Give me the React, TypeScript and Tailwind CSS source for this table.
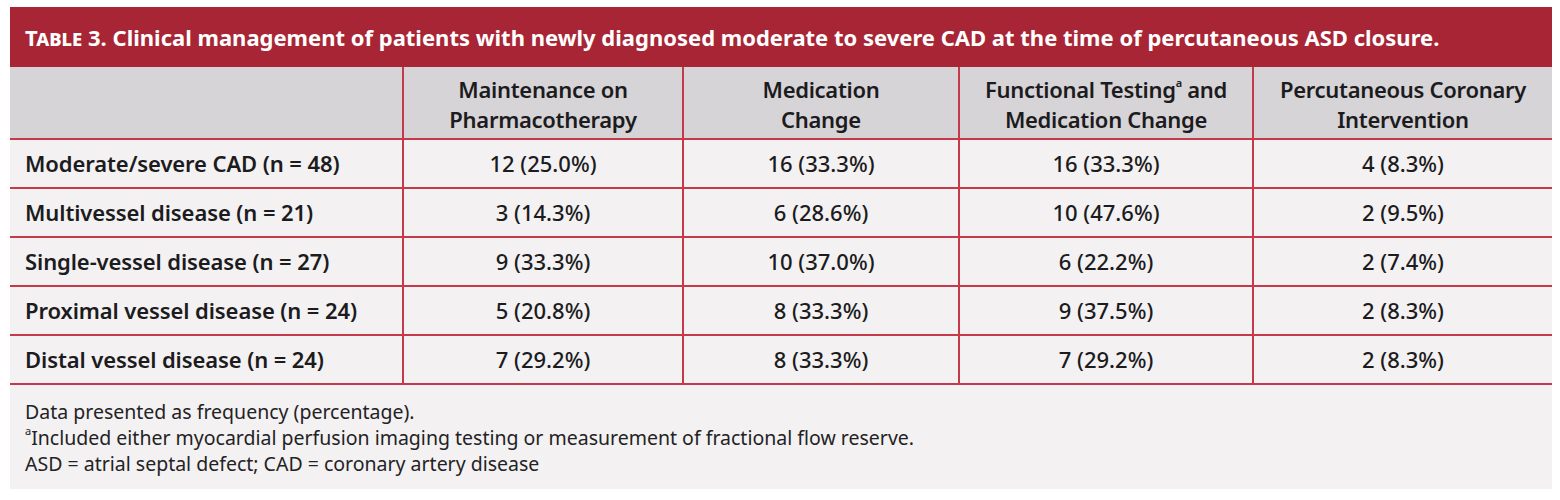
const columns = [
  "Maintenance on Pharmacotherapy",
  "Medication Change",
  "Functional Testing",
  "Percutaneous Coronary Intervention",
];

const rows = [
  { label: "Moderate/severe CAD (n = 48)", values: ["12 (25.0%)", "16 (33.3%)", "16 (33.3%)", "4 (8.3%)"] },
  { label: "Multivessel disease (n = 21)", values: ["3 (14.3%)", "6 (28.6%)", "10 (47.6%)", "2 (9.5%)"] },
  { label: "Single-vessel disease (n = 27)", values: ["9 (33.3%)", "10 (37.0%)", "6 (22.2%)", "2 (7.4%)"] },
  { label: "Proximal vessel disease (n = 24)", values: ["5 (20.8%)", "8 (33.3%)", "9 (37.5%)", "2 (8.3%)"] },
  { label: "Distal vessel disease (n = 24)", values: ["7 (29.2%)", "8 (33.3%)", "7 (29.2%)", "2 (8.3%)"] },
];

const grid = "grid grid-cols-[392px_280px_276px_294px_300px]";

export default function App() {
  return (
    <div className="w-[1560px] h-[500px] bg-white pt-[7px] pl-[10px] font-['Noto_Sans',sans-serif] text-[#1c1b1d]">
      <div className="w-[1542px] bg-[#f3f1f2]">
        {/* Title */}
        <div className="h-[60px] bg-[#a82535] flex items-center pl-[15px] pt-[1px]">
          <h1 className="text-white text-[22px] font-bold">
            <span className="[font-variant:small-caps]">Table</span> 3. Clinical management of patients with newly diagnosed moderate to severe CAD at the time of percutaneous ASD closure.
          </h1>
        </div>

        {/* Column headers */}
        <div className={`${grid} bg-[#d6d4d7] h-[73px] border-b-2 border-[#c43a4b]`}>
          <div />
          {columns.map((c, i) => (
            <div
              key={c}
              className="border-l-2 border-[#c43a4b] flex items-center justify-center text-center text-[22px] font-semibold leading-[30px] pt-[3px] tracking-[-0.3px]"
            >
              {i === 2 ? (
                <span>
                  Functional Testing<sup className="text-[11px] font-semibold -top-[1em]">a</sup> and
                  <br />
                  Medication Change
                </span>
              ) : (
                <span className={i === 0 ? "px-6" : i === 1 ? "px-10" : "px-2"}>{c}</span>
              )}
            </div>
          ))}
        </div>

        {/* Data rows */}
        {rows.map((r) => (
          <div key={r.label} className={`${grid} h-[49px] border-b-2 border-[#c43a4b]`}>
            <div className="flex items-center pl-[15px] text-[22px] font-semibold tracking-[-0.1px]">{r.label}</div>
            {r.values.map((v, i) => (
              <div
                key={i}
                className="border-l-2 border-[#c43a4b] flex items-center justify-center text-[22px] font-medium"
              >
                {v}
              </div>
            ))}
          </div>
        ))}

        {/* Footnotes */}
        <div className="pl-[15px] pt-[14px] pb-[12px] text-[19.5px] leading-[26px] text-[#232224]">
          <p>Data presented as frequency (percentage).</p>
          <p>
            <sup className="text-[11px] -top-[0.9em]">a</sup>Included either myocardial perfusion imaging testing or measurement of fractional flow reserve.
          </p>
          <p>ASD = atrial septal defect; CAD = coronary artery disease</p>
        </div>
      </div>
    </div>
  );
}
